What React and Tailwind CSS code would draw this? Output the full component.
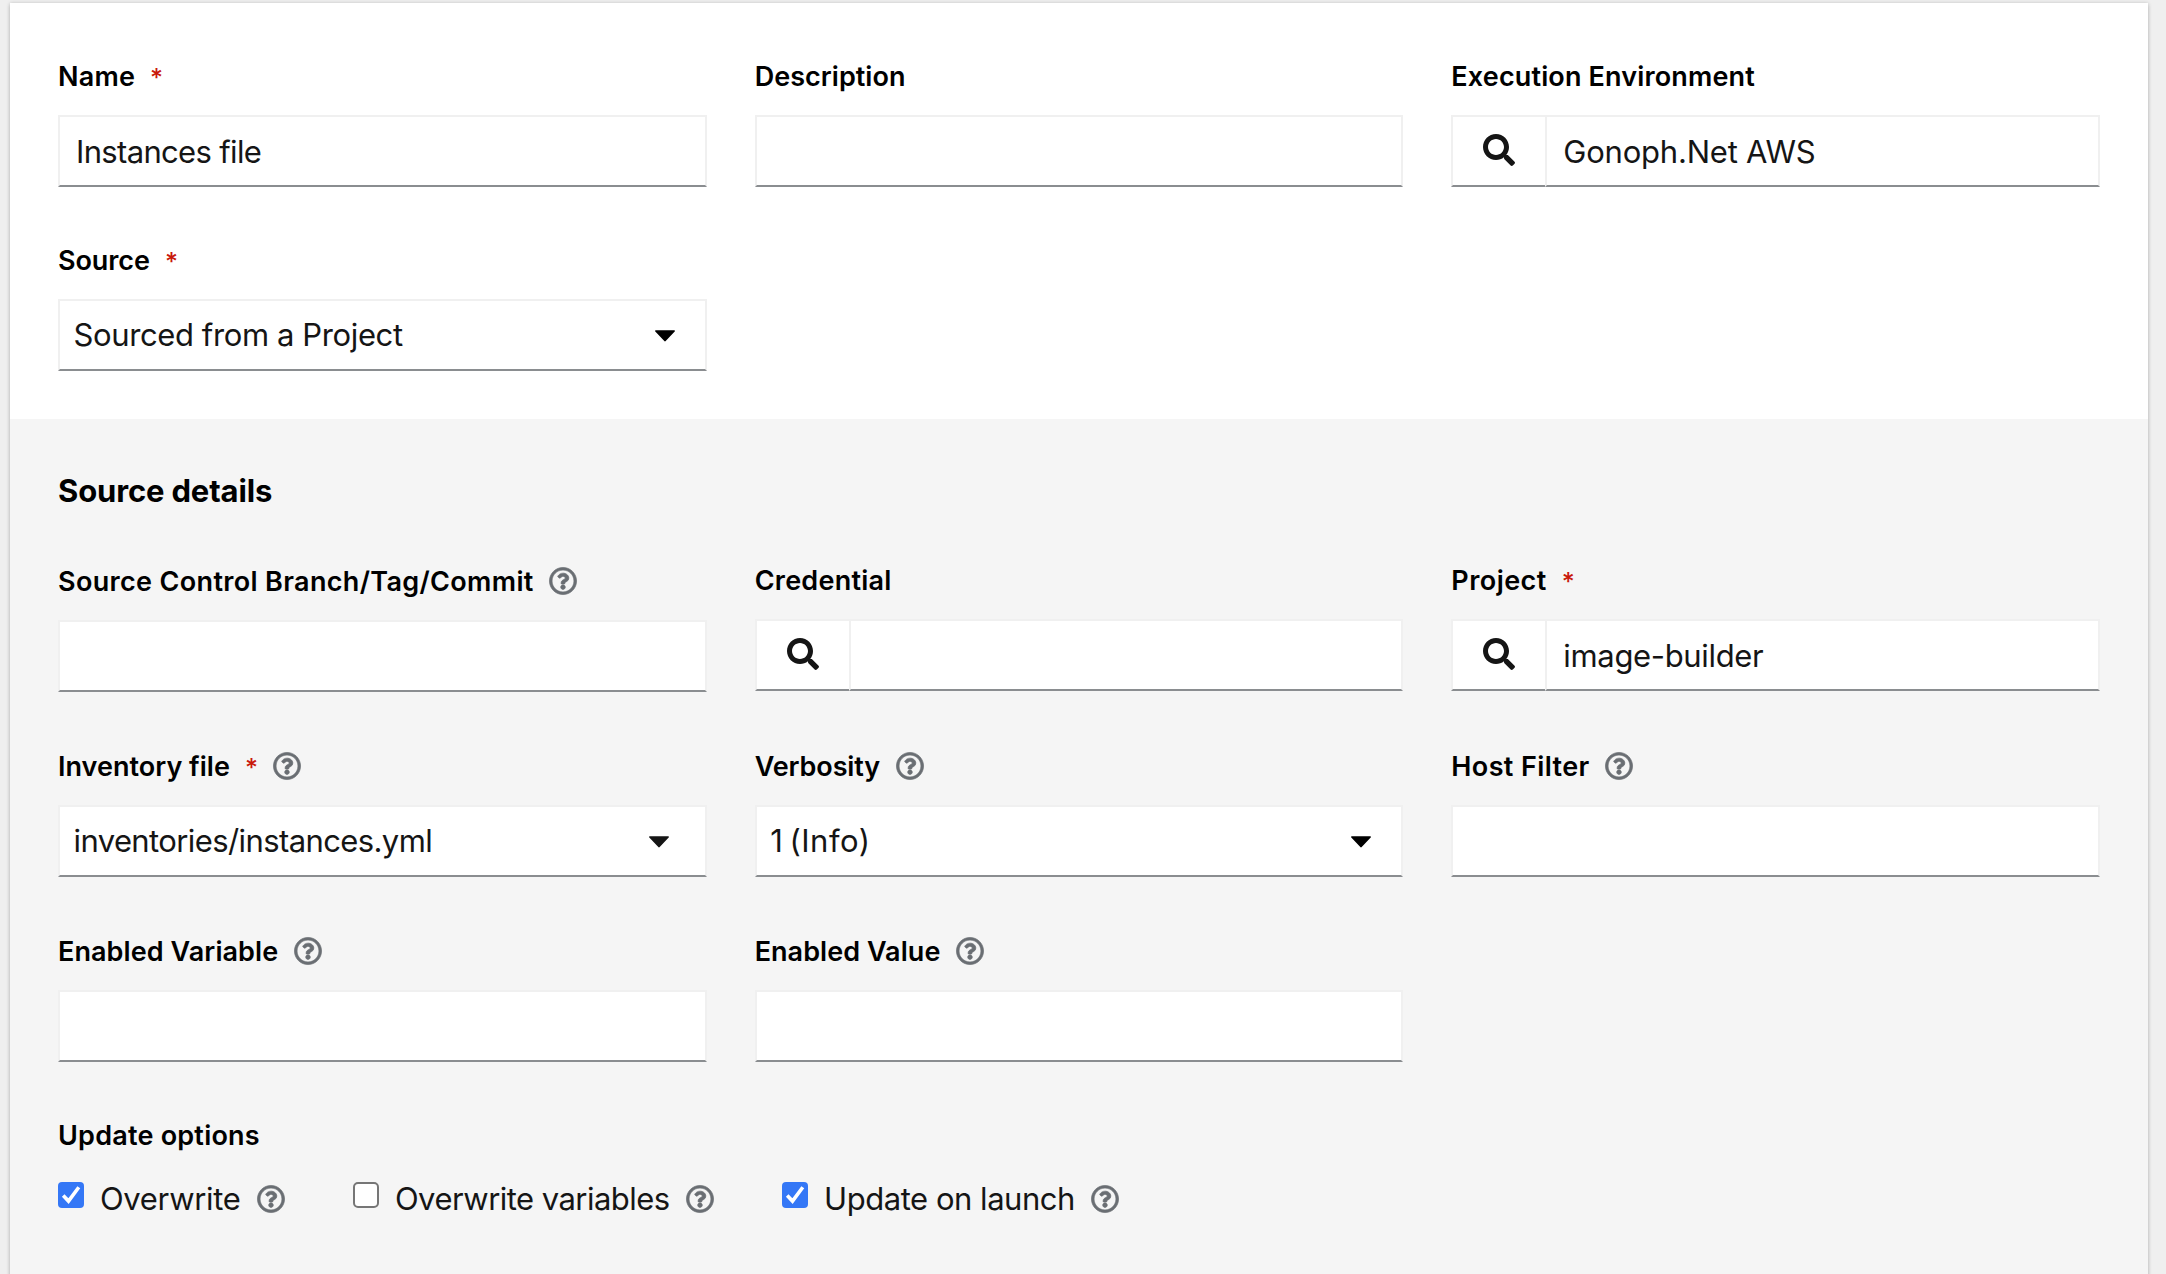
import { FaRegQuestionCircle, FaSearch } from "react-icons/fa";

function Help() {
  return <FaRegQuestionCircle className="size-7 shrink-0 overflow-visible stroke-current stroke-[12px] text-[#6a6e73]" />;
}

function Caret({ className }) {
  return (
    <svg viewBox="0 0 20 12" className={`h-3 w-5 shrink-0 ${className}`} fill="currentColor">
      <path d="M0.8 0.2H19.2C20 0.2 20.2 1 19.7 1.6L10.7 11.1C10.3 11.6 9.7 11.6 9.3 11.1L0.3 1.6C-0.2 1 0 0.2 0.8 0.2Z" />
    </svg>
  );
}

function Field({ label, spacing, required, help, children }) {
  return (
    <div>
      <div
        className={`mb-[19px] flex items-center text-[27px] font-semibold whitespace-nowrap text-black ${
          help ? "h-[41px] pt-px" : "h-10"
        }`}
      >
        <span className={`pt-0.5 ${spacing}`}>{label}</span>
        {required && (
          <span className="ml-[15px] h-10 w-[13px] text-[25px] leading-[44px] font-medium text-[#c9190b]">*</span>
        )}
        {help && (
          <span className="ml-[15.5px]">
            <Help />
          </span>
        )}
      </div>
      {children}
    </div>
  );
}

const box = "h-[72px] border-2 border-[#f0f0f0] border-b-[#8a8d90] bg-white text-[31px] text-[#151515]";

function TextBox({ value, spacing }) {
  return (
    <div className={`flex items-center px-4 pt-0.5 ${box}`}>
      <span className={spacing}>{value}</span>
    </div>
  );
}

function SelectBox({ value, spacing, caret }) {
  return (
    <div className={`flex items-center justify-between pl-[13.5px] ${box}`}>
      <span className={spacing}>{value}</span>
      <Caret className={caret} />
    </div>
  );
}

function LookupBox({ value, spacing }) {
  return (
    <div className="flex">
      <div className={`flex w-[94px] items-center justify-center border-r-0 pb-[3px] ${box}`}>
        <FaSearch className="size-8" />
      </div>
      <div className={`flex flex-1 items-center px-4 pt-0.5 ${box}`}>
        <span className={spacing}>{value}</span>
      </div>
    </div>
  );
}

function Checkbox({ checked, label, spacing }) {
  return (
    <div className="flex h-12 items-center">
      {checked ? (
        <span className="-mt-1 mb-1 flex size-[26px] items-center justify-center rounded-[4px] bg-[#3477f6]">
          <svg viewBox="0 0 26 26" className="size-[26px]" fill="none" stroke="#fff" strokeWidth="3.6">
            <path d="M5.2 13.6L10.5 19.1L20.8 5.2" />
          </svg>
        </span>
      ) : (
        <span className="-mt-1 mb-1 size-[26px] rounded-[5px] border-2 border-[#767676] bg-white" />
      )}
      <span className={`ml-4 text-[31px] leading-[48px] text-[#151515] ${spacing}`}>{label}</span>
      <span className="ml-[16.5px]">
        <Help />
      </span>
    </div>
  );
}

export default function App() {
  return (
    <div className="h-[1274px] w-[2166px] overflow-hidden bg-[#efefef] pt-[3px] pr-[18px] pl-[10px] font-['Inter',sans-serif]">
      <div className="h-[1300px] bg-[#f5f5f5] shadow-[0_2px_4px_rgba(3,3,3,0.16),0_0_4px_rgba(3,3,3,0.14)]">
        <section className="grid grid-cols-3 gap-x-12 gap-y-[53px] bg-white px-12 pt-[53px] pb-12">
          <Field label="Name" spacing="tracking-[0.195px]" required>
            <TextBox value="Instances file" spacing="tracking-[-0.659px]" />
          </Field>
          <Field label="Description" spacing="tracking-[0.03px]">
            <TextBox />
          </Field>
          <Field label="Execution Environment" spacing="tracking-[0.15px]">
            <LookupBox value="Gonoph.Net AWS" spacing="tracking-[-0.22px]" />
          </Field>
          <Field label="Source" spacing="tracking-[-0.077px]" required>
            <SelectBox value="Sourced from a Project" spacing="tracking-[-0.386px]" caret="mt-0.5 mr-[30px] text-black" />
          </Field>
        </section>

        <section className="px-12 pt-[51px]">
          <h2 className="mb-[50px] h-10 text-[31px] leading-[42px] font-bold tracking-[-0.15px] text-black">
            Source details
          </h2>
          <div className="grid grid-cols-3 gap-x-12 gap-y-[53px]">
            <Field label="Source Control Branch/Tag/Commit" spacing="tracking-[0.341px]" help>
              <TextBox />
            </Field>
            <Field label="Credential" spacing="tracking-[0.242px]">
              <LookupBox />
            </Field>
            <Field label="Project" spacing="tracking-[0.44px]" required>
              <LookupBox value="image-builder" spacing="tracking-[-0.341px]" />
            </Field>
            <Field label="Inventory file" spacing="tracking-[0.02px]" required help>
              <SelectBox
                value="inventories/instances.yml"
                spacing="tracking-[-0.6px]"
                caret="mt-px mr-9 text-[#151515]"
              />
            </Field>
            <Field label="Verbosity" spacing="tracking-[-0.1px]" help>
              <SelectBox
                value="1 (Info)"
                spacing="tracking-[0.5px] [word-spacing:-3px]"
                caret="mt-0.5 mr-[30px] text-black"
              />
            </Field>
            <Field label="Host Filter" spacing="tracking-[0.38px]" help>
              <TextBox />
            </Field>
            <Field label="Enabled Variable" spacing="tracking-[0.08px]" help>
              <TextBox />
            </Field>
            <Field label="Enabled Value" spacing="tracking-[0.05px]" help>
              <TextBox />
            </Field>
          </div>
          <div className="mt-[53px]">
            <div className="h-10 text-[27px] leading-[42px] font-semibold tracking-[0.22px] text-black">
              Update options
            </div>
            <div className="mt-5 flex gap-[68px]">
              <Checkbox checked label="Overwrite" spacing="tracking-[-0.337px]" />
              <Checkbox label="Overwrite variables" spacing="tracking-[-0.539px]" />
              <Checkbox checked label="Update on launch" spacing="tracking-[-0.464px]" />
            </div>
          </div>
        </section>
      </div>
    </div>
  );
}
